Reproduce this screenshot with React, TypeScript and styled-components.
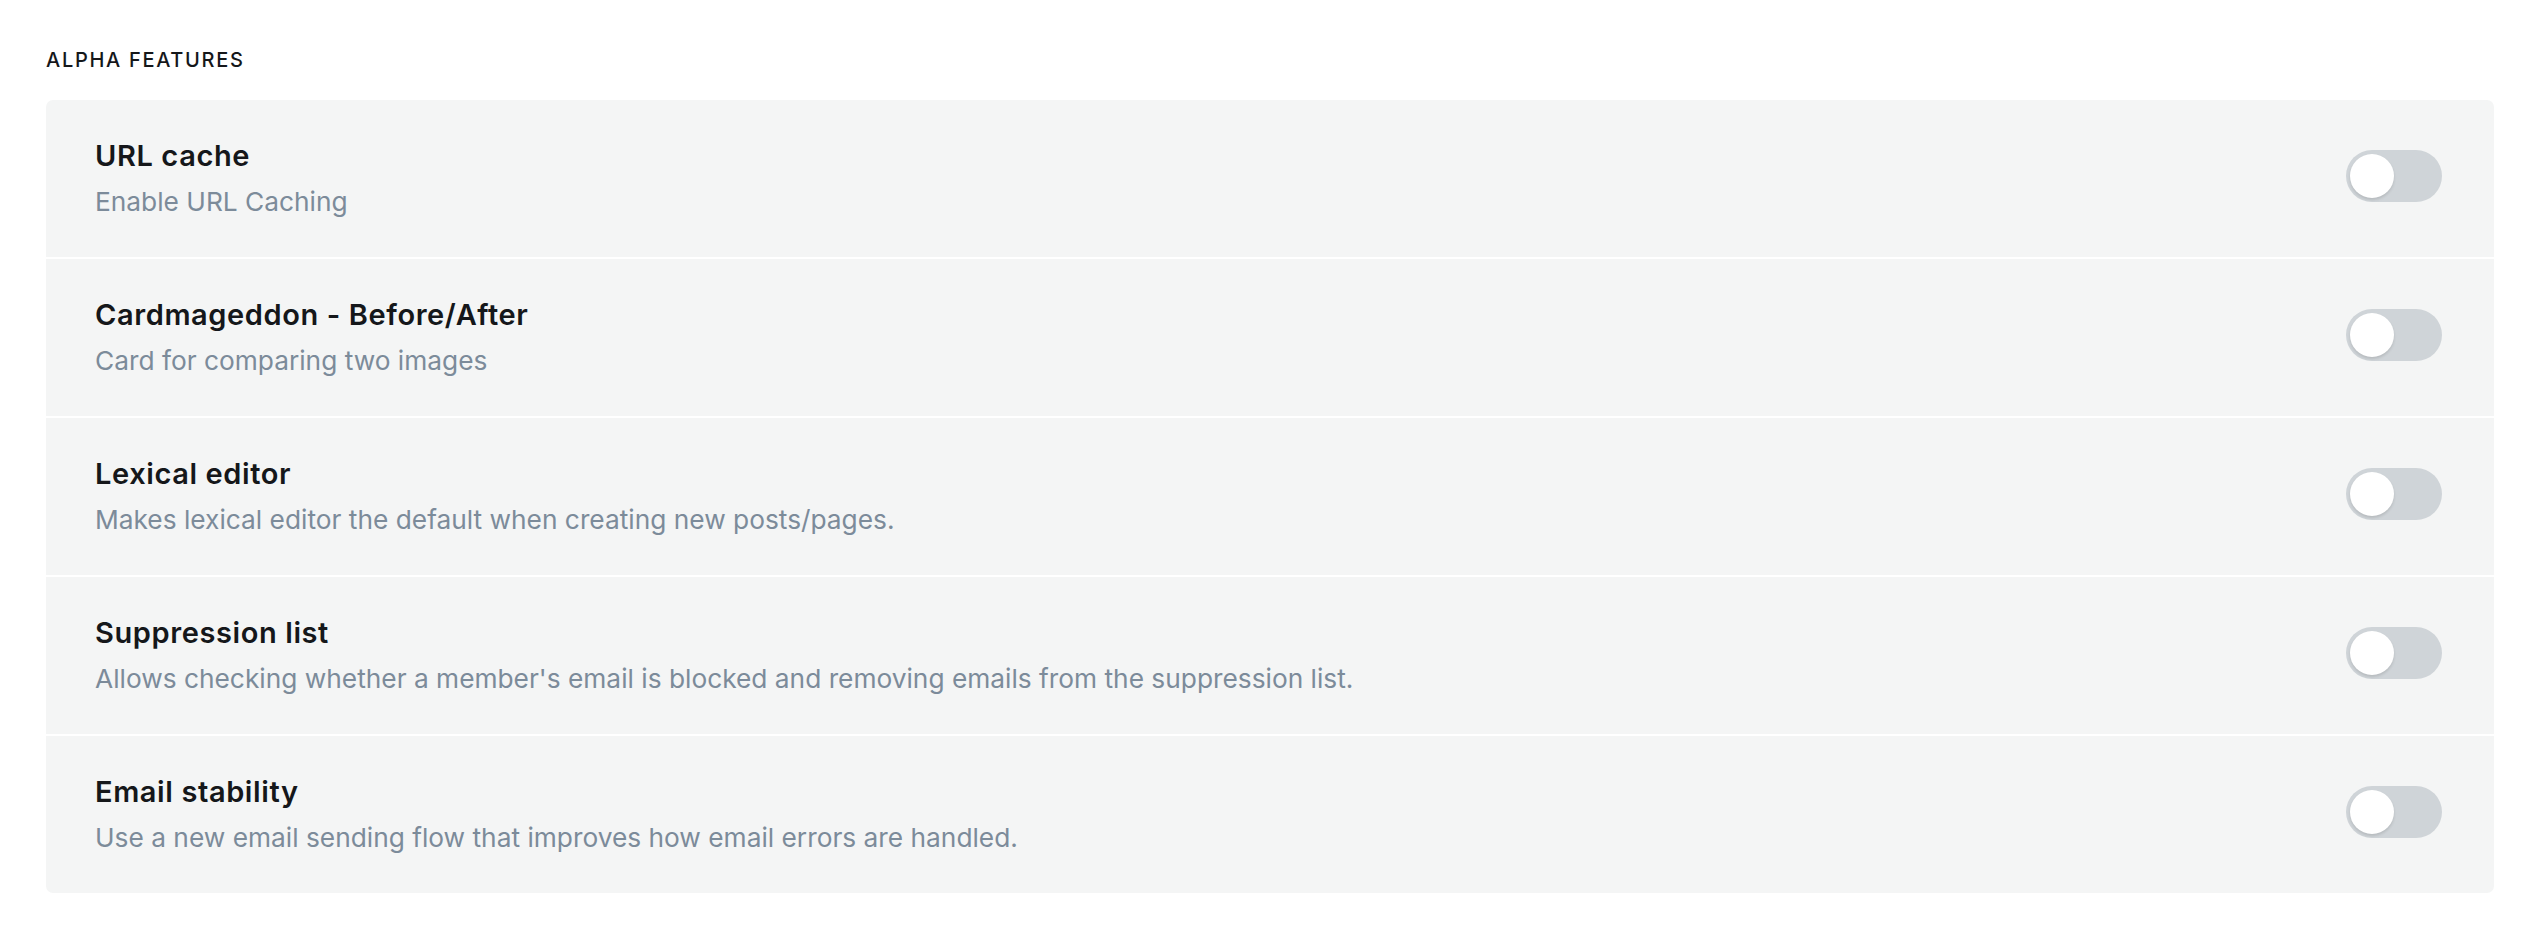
import React, { useState } from "react";
import styled, { createGlobalStyle } from "styled-components";

const Colors = {
    TEXT: "#15171a",
    MUTED: "#7c8b9a",
    PANEL: "#f4f5f5",
    TRACK: "#cfd4d8",
    TRACK_ON: "#30cf43",
};

const GlobalStyle = createGlobalStyle`
    html, body {
        margin: 0;
        padding: 0;
        background: #ffffff;
    }
    body {
        font-family: Inter, "Noto Sans", "Liberation Sans", sans-serif;
        color: ${Colors.TEXT};
        -webkit-font-smoothing: antialiased;
    }
`;

const Page = styled.main`
    padding: 50px 34px 40px 46px;
`;

const SectionHeading = styled.h4`
    margin: 0 0 30px;
    font-size: 20px;
    line-height: 20px;
    font-weight: 500;
    letter-spacing: 1.7px;
    text-transform: uppercase;
    color: ${Colors.TEXT};
`;

const Panel = styled.section`
    display: flex;
    flex-direction: column;
    gap: 2px;
    border-radius: 7px;
    overflow: hidden;
    background: #ffffff;
`;

const Row = styled.div`
    display: flex;
    align-items: center;
    justify-content: space-between;
    padding: 36px 52px 36px 49px;
    background: ${Colors.PANEL};
`;

const TextBlock = styled.div`
    display: flex;
    flex-direction: column;
    gap: 8px;
`;

const Title = styled.h5`
    margin: 0;
    font-size: 29px;
    line-height: 39px;
    font-weight: 600;
    letter-spacing: 0.6px;
    color: ${Colors.TEXT};
`;

const Description = styled.p`
    margin: 0;
    font-size: 26.3px;
    line-height: 38px;
    font-weight: 400;
    color: ${Colors.MUTED};
`;

const Track = styled.button<{ $on: boolean }>`
    position: relative;
    flex-shrink: 0;
    width: 96px;
    height: 52px;
    margin-bottom: 5px;
    padding: 0;
    border: none;
    border-radius: 26px;
    background: ${(p) => (p.$on ? Colors.TRACK_ON : Colors.TRACK)};
    cursor: pointer;
    transition: background 0.15s ease;
`;

const Knob = styled.span<{ $on: boolean }>`
    position: absolute;
    top: 4px;
    left: ${(p) => (p.$on ? "48px" : "4px")};
    width: 44px;
    height: 44px;
    border-radius: 50%;
    background: #ffffff;
    box-shadow: 0 2px 3px rgba(0, 0, 0, 0.12);
    transition: left 0.15s ease;
`;

const features = [
    { title: "URL cache", description: "Enable URL Caching" },
    { title: "Cardmageddon - Before/After", description: "Card for comparing two images" },
    { title: "Lexical editor", description: "Makes lexical editor the default when creating new posts/pages." },
    {
        title: "Suppression list",
        description: "Allows checking whether a member's email is blocked and removing emails from the suppression list.",
    },
    { title: "Email stability", description: "Use a new email sending flow that improves how email errors are handled." },
];

const Toggle = () => {
    const [on, setOn] = useState(false);
    return (
        <Track $on={on} onClick={() => setOn(!on)} aria-pressed={on}>
            <Knob $on={on} />
        </Track>
    );
};

export default function App() {
    return (
        <>
            <GlobalStyle />
            <Page>
                <SectionHeading>Alpha features</SectionHeading>
                <Panel>
                    {features.map((f) => (
                        <Row key={f.title}>
                            <TextBlock>
                                <Title>{f.title}</Title>
                                <Description>{f.description}</Description>
                            </TextBlock>
                            <Toggle />
                        </Row>
                    ))}
                </Panel>
            </Page>
        </>
    );
}
